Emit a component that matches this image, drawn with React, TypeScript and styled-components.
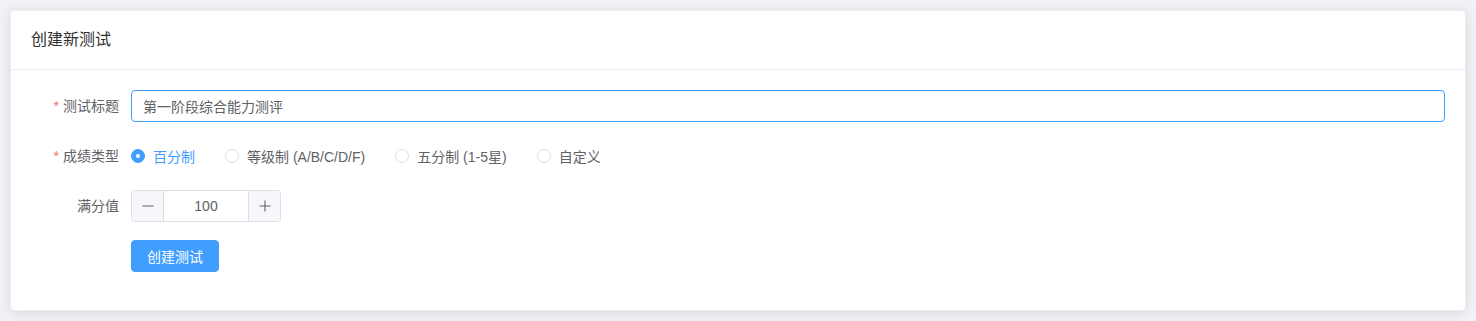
import React, { useState } from 'react';
import styled, { createGlobalStyle } from 'styled-components';

const GlobalStyle = createGlobalStyle`
  html, body {
    margin: 0;
    padding: 0;
    background: #f0f2f5;
  }
  body {
    font-family: "Liberation Sans", "Noto Sans CJK SC", sans-serif;
    font-size: 14px;
    color: #606266;
  }
  * {
    box-sizing: border-box;
  }
`;

const Page = styled.div`
  padding: 10px;
`;

const Card = styled.div`
  background: #fff;
  border: 1px solid #ebeef5;
  border-radius: 4px;
  box-shadow: 0 2px 12px 0 rgba(0, 0, 0, 0.1);
  overflow: hidden;
`;

const CardHeader = styled.div`
  padding: 18px 20px;
  border-bottom: 1px solid #ebeef5;
  font-size: 16px;
  line-height: 22px;
  color: #303133;
`;

const CardBody = styled.div`
  padding: 20px;
`;

const FormItem = styled.div`
  display: flex;
  align-items: center;
  margin-bottom: 18px;
  min-height: 32px;
`;

const Label = styled.label<{ $required?: boolean }>`
  width: 100px;
  flex-shrink: 0;
  padding-right: 12px;
  text-align: right;
  line-height: 32px;
  color: #606266;

  &::before {
    content: ${(p) => (p.$required ? "'*'" : "''")};
    color: #f56c6c;
    margin-right: 4px;
  }
`;

const Content = styled.div`
  flex: 1;
  display: flex;
  align-items: center;
`;

const TextInput = styled.input`
  width: 100%;
  height: 32px;
  padding: 0 11px;
  border: 1px solid #409eff;
  border-radius: 4px;
  font: inherit;
  color: #606266;
  outline: none;
`;

const RadioGroup = styled.div`
  display: flex;
  align-items: center;
  height: 32px;
`;

const RadioLabel = styled.label<{ $checked?: boolean }>`
  display: flex;
  align-items: center;
  margin-right: 30px;
  cursor: pointer;
  color: ${(p) => (p.$checked ? '#409eff' : '#606266')};
`;

const RadioDot = styled.span<{ $checked?: boolean }>`
  width: 14px;
  height: 14px;
  border-radius: 50%;
  border: 1px solid ${(p) => (p.$checked ? '#409eff' : '#dcdfe6')};
  background: ${(p) => (p.$checked ? '#409eff' : '#fff')};
  display: flex;
  align-items: center;
  justify-content: center;
  margin-right: 8px;

  &::after {
    content: '';
    width: 4px;
    height: 4px;
    border-radius: 50%;
    background: #fff;
    display: ${(p) => (p.$checked ? 'block' : 'none')};
  }
`;

const NumberBox = styled.div`
  display: flex;
  width: 150px;
  height: 32px;
  border: 1px solid #dcdfe6;
  border-radius: 4px;
  overflow: hidden;
`;

const StepButton = styled.button<{ $side: 'left' | 'right' }>`
  width: 32px;
  border: none;
  ${(p) => (p.$side === 'left' ? 'border-right' : 'border-left')}: 1px solid #dcdfe6;
  background: #f5f7fa;
  color: #606266;
  display: flex;
  align-items: center;
  justify-content: center;
  padding: 0;
  cursor: pointer;
`;

const NumberValue = styled.input`
  flex: 1;
  min-width: 0;
  border: none;
  outline: none;
  text-align: center;
  font: inherit;
  color: #606266;
`;

const PrimaryButton = styled.button`
  height: 32px;
  padding: 0 15px;
  background: #409eff;
  border: 1px solid #409eff;
  border-radius: 4px;
  color: #fff;
  font: inherit;
  cursor: pointer;
`;

const options = ['百分制', '等级制 (A/B/C/D/F)', '五分制 (1-5星)', '自定义'];

export default function App() {
  const [type, setType] = useState(0);
  const [score, setScore] = useState(100);

  return (
    <Page>
      <GlobalStyle />
      <Card>
        <CardHeader>创建新测试</CardHeader>
        <CardBody>
          <FormItem>
            <Label $required>测试标题</Label>
            <Content>
              <TextInput defaultValue="第一阶段综合能力测评" />
            </Content>
          </FormItem>
          <FormItem>
            <Label $required>成绩类型</Label>
            <Content>
              <RadioGroup>
                {options.map((o, i) => (
                  <RadioLabel key={o} $checked={type === i} onClick={() => setType(i)}>
                    <RadioDot $checked={type === i} />
                    {o}
                  </RadioLabel>
                ))}
              </RadioGroup>
            </Content>
          </FormItem>
          <FormItem>
            <Label>满分值</Label>
            <Content>
              <NumberBox>
                <StepButton $side="left" onClick={() => setScore(score - 1)}>
                  <svg width="14" height="14" viewBox="0 0 14 14">
                    <path d="M1.5 7h11" stroke="#606266" strokeWidth="1.1" />
                  </svg>
                </StepButton>
                <NumberValue value={score} onChange={(e) => setScore(Number(e.target.value) || 0)} />
                <StepButton $side="right" onClick={() => setScore(score + 1)}>
                  <svg width="14" height="14" viewBox="0 0 14 14">
                    <path d="M1.5 7h11M7 1.5v11" stroke="#606266" strokeWidth="1.1" />
                  </svg>
                </StepButton>
              </NumberBox>
            </Content>
          </FormItem>
          <FormItem>
            <Label />
            <Content>
              <PrimaryButton>创建测试</PrimaryButton>
            </Content>
          </FormItem>
        </CardBody>
      </Card>
    </Page>
  );
}
